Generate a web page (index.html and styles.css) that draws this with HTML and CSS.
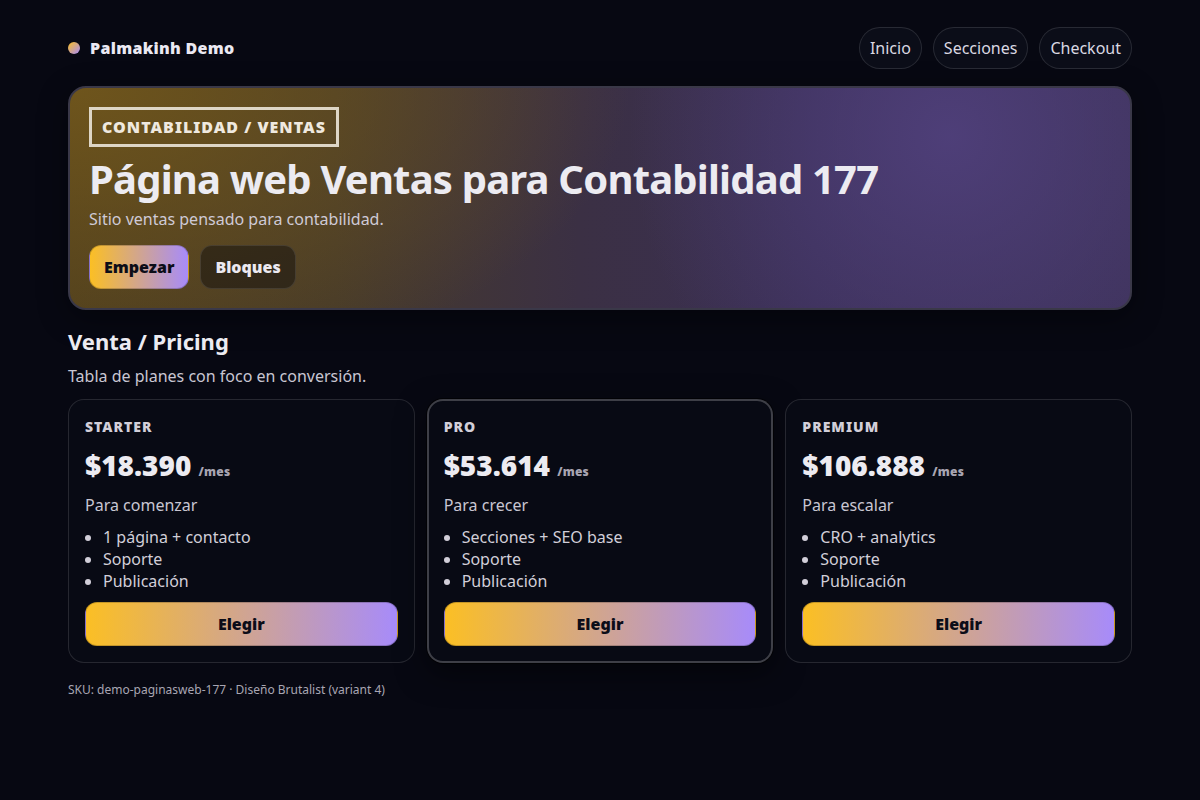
FILE: index.html
```html
<!DOCTYPE html>
<html lang="es">
<head>
<meta charset="utf-8">
<title>Palmakinh Demo</title>
<link rel="stylesheet" href="styles.css">
</head>
<body>
<div class="page">
  <header class="top">
    <div class="brand"><span class="dot"></span><span>Palmakinh Demo</span></div>
    <nav class="nav">
      <a class="pill" href="#">Inicio</a>
      <a class="pill" href="#">Secciones</a>
      <a class="pill" href="#">Checkout</a>
    </nav>
  </header>

  <section class="hero">
    <div class="badge">CONTABILIDAD / VENTAS</div>
    <h1 class="title">Página web Ventas para Contabilidad 177</h1>
    <p class="lead">Sitio ventas pensado para contabilidad.</p>
    <div class="actions">
      <a class="btn btn-grad" href="#">Empezar</a>
      <a class="btn btn-dark" href="#">Bloques</a>
    </div>
  </section>

  <section class="pricing">
    <h2 class="h2">Venta / Pricing</h2>
    <p class="sub">Tabla de planes con foco en conversión.</p>
    <div class="cards">
      <div class="card">
        <div class="plan">STARTER</div>
        <div class="price">$18.390 <span class="per">/mes</span></div>
        <div class="desc">Para comenzar</div>
        <ul class="list">
          <li>1 página + contacto</li>
          <li>Soporte</li>
          <li>Publicación</li>
        </ul>
        <a class="btn btn-grad btn-full" href="#">Elegir</a>
      </div>
      <div class="card card-hi">
        <div class="plan">PRO</div>
        <div class="price">$53.614 <span class="per">/mes</span></div>
        <div class="desc">Para crecer</div>
        <ul class="list">
          <li>Secciones + SEO base</li>
          <li>Soporte</li>
          <li>Publicación</li>
        </ul>
        <a class="btn btn-grad btn-full" href="#">Elegir</a>
      </div>
      <div class="card">
        <div class="plan">PREMIUM</div>
        <div class="price">$106.888 <span class="per">/mes</span></div>
        <div class="desc">Para escalar</div>
        <ul class="list">
          <li>CRO + analytics</li>
          <li>Soporte</li>
          <li>Publicación</li>
        </ul>
        <a class="btn btn-grad btn-full" href="#">Elegir</a>
      </div>
    </div>
  </section>

  <footer class="foot">SKU: demo-paginasweb-177 · Diseño Brutalist (variant 4)</footer>
</div>
</body>
</html>
```
FILE: styles.css
```css
* { box-sizing: border-box; }
html, body { margin: 0; padding: 0; }
body {
  background: #070812;
  color: #e8e6ef;
  font-family: "Noto Sans", "Open Sans", sans-serif;
  min-height: 800px;
}
a { text-decoration: none; color: inherit; }
.page {
  width: 1064px;
  margin: 0 auto;
  padding-top: 27px;
}
.top {
  display: flex;
  align-items: center;
  justify-content: space-between;
  height: 42px;
}
.brand {
  display: flex;
  align-items: center;
  gap: 10px;
  font-weight: 900;
  font-size: 16px;
  letter-spacing: 0.3px;
  color: #ebe9f2;
}
.dot {
  width: 12px; height: 12px; border-radius: 50%;
  background: linear-gradient(135deg, #fbbf24, #a78bfa);
}
.nav { display: flex; gap: 11px; }
.pill {
  height: 42px;
  display: flex; align-items: center;
  padding: 0 10px;
  border: 1px solid rgba(255,255,255,0.12);
  border-radius: 999px;
  font-size: 16px;
  color: #dad8e2;
  background: #0b0d18;
}
.hero {
  margin-top: 17px;
  height: 224px;
  border: 2px solid #3a3848;
  border-radius: 18px;
  padding: 19px 19px;
  background:
    radial-gradient(ellipse 560px 300px at 0% 0%, rgba(112,86,28,0.95), rgba(112,86,28,0) 100%),
    radial-gradient(circle 320px at 83% 22%, rgba(80,64,124,0.9), rgba(80,64,124,0) 100%),
    linear-gradient(90deg, #4d3d1e 0%, #463a2a 25%, #3b3044 48%, #3a2f55 70%, #3d3259 100%);
  box-shadow: 0 8px 30px rgba(0,0,0,0.4);
}
.badge {
  display: inline-block;
  height: 40px;
  line-height: 34px;
  border: 3px solid #ded6c6;
  padding: 0 10px;
  font-weight: 900;
  font-size: 16px;
  letter-spacing: 1px;
  color: #efe9df;
}
.title {
  margin: 7px 0 0;
  font-size: 40px;
  line-height: 50px;
  font-weight: 700;
  color: #ecebf1;
  letter-spacing: -0.8px;
}
.lead {
  margin: 4px 0 0;
  font-size: 16px;
  line-height: 22px;
  color: #cfcad6;
}
.actions {
  display: flex; gap: 11px;
  margin-top: 15px;
}
.btn {
  height: 44px;
  display: inline-flex; align-items: center; justify-content: center;
  padding: 0 14px;
  border-radius: 12px;
  font-weight: 900;
  font-size: 16px;
}
.btn-grad {
  background: linear-gradient(90deg, #fbbf24, #a78bfa);
  color: #0c0d18;
  border: 1px solid rgba(0,0,0,0.2);
}
.btn-dark {
  background: rgba(24,20,16,0.55);
  border: 1px solid rgba(255,255,255,0.1);
  color: #ece9f0;
}
.pricing { margin-top: 15px; }
.h2 {
  margin: 0;
  font-size: 22px;
  line-height: 32px;
  font-weight: 700;
  color: #ecebf1;
}
.sub {
  margin: 7px 0 0;
  font-size: 16px;
  line-height: 24px;
  color: #c9c6d2;
}
.cards {
  margin-top: 11px;
  display: grid;
  grid-template-columns: repeat(3, 1fr);
  gap: 12px;
}
.card {
  height: 264px;
  border: 1px solid rgba(255,255,255,0.12);
  border-radius: 16px;
  padding: 17px 16px;
  background: #080a14;
}
.card-hi {
  border: 2px solid rgba(255,255,255,0.22);
  box-shadow: 0 0 0 1px rgba(0,0,0,0.6), 0 10px 30px rgba(0,0,0,0.5);
  padding: 16px 15px;
}
.plan {
  font-weight: 900;
  font-size: 14px;
  letter-spacing: 1px;
  line-height: 20px;
  color: #d2cfd9;
}
.price {
  margin-top: 9px;
  font-weight: 900;
  font-size: 28px;
  line-height: 38px;
  color: #ecebf1;
}
.per { font-size: 12px; font-weight: 900; color: #a8a5b2; letter-spacing: 0.2px; }
.desc {
  margin-top: 2px;
  font-size: 16px;
  line-height: 24px;
  color: #c9c6d2;
}
.list {
  margin: 9px 0 0;
  padding-left: 18px;
  font-size: 16px;
  line-height: 22px;
  color: #d2cfd9;
}
.btn-full {
  display: flex;
  width: 100%;
  margin-top: 10px;
  font-size: 16px;
}
.foot {
  margin-top: 18px;
  font-size: 12px;
  color: #a9a6b3;
}
```
